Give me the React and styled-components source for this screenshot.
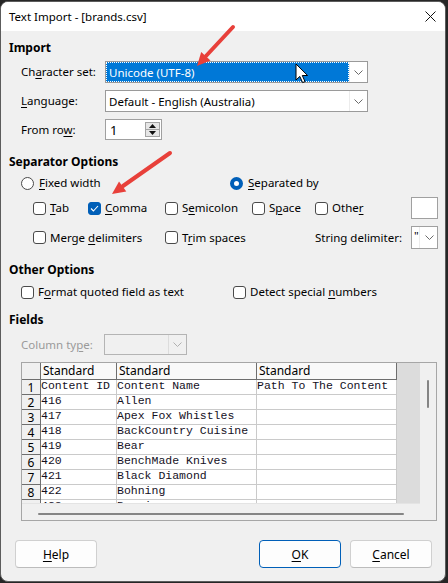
import React from 'react';
import styled, { createGlobalStyle } from 'styled-components';

const GlobalStyle = createGlobalStyle`
  html, body {
    margin: 0;
    padding: 0;
    background: #262626;
  }
  body {
    font-family: "Noto Sans", "Liberation Sans", sans-serif;
    font-size: 11.5px;
    color: #000;
  }
`;

const Screen = styled.div`
  position: relative;
  width: 448px;
  height: 583px;
  overflow: hidden;
`;

const Dialog = styled.div`
  margin-top: 1px;
  width: 446px;
  height: 581px;
  box-sizing: border-box;
  border: 1px solid #5c5c5c;
  border-radius: 8px;
  overflow: hidden;
  background: #f0f0f0;
  display: flex;
  flex-direction: column;
`;

const TitleBar = styled.div`
  height: 29px;
  flex: none;
  background: #fff;
  display: flex;
  align-items: center;
  justify-content: space-between;
  padding: 0 9px 0 8px;
`;

const Title = styled.span`
  font-size: 11.5px;
  line-height: 16px;
`;

const Body = styled.div`
  flex: 1;
  display: flex;
  flex-direction: column;
  padding: 9px 8px 0 8px;
`;

const Heading = styled.div`
  font-weight: 700;
  font-size: 12px;
  line-height: 16px;
  height: 16px;
  margin-top: ${p => p.$top || 0}px;
`;

const U = styled.span`
  text-decoration: underline;
  text-underline-offset: 2px;
`;

const FormGrid = styled.div`
  display: grid;
  grid-template-columns: ${p => p.$label}px auto;
  row-gap: 7px;
  align-items: center;
  padding-left: 12px;
  margin-top: ${p => p.$top || 0}px;
`;

const Label = styled.span`
  line-height: 16px;
  color: ${p => (p.$disabled ? '#9a9a9a' : '#000')};
  white-space: nowrap;
`;

const ComboBox = styled.div`
  width: ${p => p.$w}px;
  height: ${p => p.$h || 22}px;
  box-sizing: border-box;
  border: 1px solid ${p => (p.$disabled ? '#b4b4b4' : '#9a9a9a')};
  background: ${p => (p.$disabled ? '#f0f0f0' : '#fff')};
  display: flex;
`;

const ComboText = styled.div`
  flex: 1;
  display: flex;
  align-items: center;
  padding-left: 3px;
  white-space: nowrap;
  overflow: hidden;
  background: ${p => (p.$selected ? '#0078d7' : 'transparent')};
  color: ${p => (p.$selected ? '#fff' : '#000')};
  outline: ${p => (p.$selected ? '1px dotted #fff' : 'none')};
  outline-offset: -1px;
`;

const DropButton = styled.div`
  width: ${p => p.$w || 17}px;
  flex: none;
  border-left: 1px solid ${p => (p.$flat ? 'transparent' : p.$disabled ? '#dcdcdc' : '#ececec')};
  background: ${p => (p.$disabled ? '#f0f0f0' : '#fff')};
  display: flex;
  align-items: center;
  justify-content: center;
`;

const Chevron = ({ color = '#6a6a6a' }) => (
  <svg width="9" height="5" viewBox="0 0 9 5">
    <path d="M0.5 0.5 L4.5 4.5 L8.5 0.5" fill="none" stroke={color} strokeWidth="1" />
  </svg>
);

const Combo = ({ w, h, text, selected, disabled }) => (
  <ComboBox $w={w} $h={h} $disabled={disabled}>
    <ComboText $selected={selected}>{text}</ComboText>
    <DropButton $disabled={disabled}>
      <Chevron color={disabled ? '#b0b0b0' : '#6a6a6a'} />
    </DropButton>
  </ComboBox>
);

const SpinBox = styled.div`
  width: 57px;
  height: 21px;
  box-sizing: border-box;
  border: 1px solid #a0a0a0;
  background: #fff;
  display: flex;
  align-items: center;
  padding: 0 1px 0 4px;
`;

const SpinValue = styled.span`
  flex: 1;
  font-size: 13px;
`;

const SpinButtons = styled.div`
  display: flex;
  flex-direction: column;
`;

const SpinButton = styled.div`
  width: 15px;
  height: 8px;
  box-sizing: border-box;
  border: 1px solid #a4a4a4;
  background: #e6e6e6;
  display: flex;
  align-items: center;
  justify-content: center;
  margin-top: ${p => (p.$down ? '-1px' : '0')};
`;

const Tri = ({ down }) => (
  <svg width="7" height="4" viewBox="0 0 7 4">
    <path d={down ? 'M0 0 L7 0 L3.5 4 Z' : 'M0 4 L7 4 L3.5 0 Z'} fill="#111" />
  </svg>
);

const OptionRow = styled.div`
  display: grid;
  grid-template-columns: ${p => p.$cols};
  align-items: center;
  height: ${p => p.$h || 16}px;
  padding-left: ${p => p.$indent}px;
  margin-top: ${p => p.$top || 0}px;
`;

const Option = styled.label`
  display: flex;
  align-items: center;
  gap: ${p => p.$gap || 4}px;
  white-space: nowrap;
  line-height: 16px;
`;

const Box = styled.span`
  width: 13px;
  height: 13px;
  box-sizing: border-box;
  border-radius: 3px;
  border: 1px solid ${p => (p.$checked ? '#005fb8' : '#4a4a4a')};
  background: ${p => (p.$checked ? '#005fb8' : '#fff')};
  display: flex;
  align-items: center;
  justify-content: center;
  flex: none;
`;

const Radio = styled.span`
  width: 13px;
  height: 13px;
  box-sizing: border-box;
  border-radius: 50%;
  border: ${p => (p.$checked ? '4px solid #005fb8' : '1px solid #4a4a4a')};
  background: #fff;
  flex: none;
`;

const Check = ({ checked, children }) => (
  <Option>
    <Box $checked={checked}>
      {checked && (
        <svg width="9" height="7" viewBox="0 0 9 7">
          <path d="M1 3.5 L3.4 6 L8 1" fill="none" stroke="#fff" strokeWidth="1.1" />
        </svg>
      )}
    </Box>
    <span>{children}</span>
  </Option>
);

const RadioOption = ({ checked, children }) => (
  <Option $gap={5}>
    <Radio $checked={checked} />
    <span>{children}</span>
  </Option>
);

const TextField = styled.div`
  width: 27px;
  height: 22px;
  box-sizing: border-box;
  border: 1px solid #a0a0a0;
  background: #fff;
`;

const SmallCombo = styled.div`
  width: 27px;
  height: 23px;
  box-sizing: border-box;
  border: 1px solid #a0a0a0;
  background: #fff;
  display: flex;
`;

const Quote = styled.span`
  width: 8px;
  padding: 2px 0 0 2px;
  line-height: 14px;
  border-right: 1px solid #ececec;
`;

const GridFrame = styled.div`
  margin: 7px 0 0 12px;
  width: 416px;
  height: 159px;
  box-sizing: border-box;
  border: 1px solid #a6a6a6;
  background: #f0f0f0;
  display: grid;
  grid-template-columns: 398px 16px;
  grid-template-rows: 140px 17px;
`;

const DataArea = styled.div`
  background: #dcdcdc;
  overflow: hidden;
`;

const Table = styled.div`
  display: grid;
  grid-template-columns: 19px 76px 140px 140px;
  grid-template-rows: 17px;
  grid-auto-rows: 15px;
  width: 375px;
`;

const Corner = styled.div`
  background: #f0f0f0;
  border-right: 1px solid #6e6e6e;
  border-bottom: 1px solid #6e6e6e;
`;

const HeadCell = styled.div`
  background: #f9f9f9;
  border-right: 1px solid #6e6e6e;
  border-bottom: 1px solid #6e6e6e;
  padding-left: 2px;
  font-size: 12px;
  line-height: 16px;
  white-space: nowrap;
  overflow: hidden;
`;

const RowNum = styled.div`
  box-sizing: border-box;
  background: #f0f0f0;
  border-right: 1px solid #6e6e6e;
  border-bottom: 1px solid #6e6e6e;
  font-size: 12px;
  line-height: 12px;
  padding-top: 2px;
  text-align: center;
  overflow: hidden;
`;

const Cell = styled.div`
  box-sizing: border-box;
  background: #fff;
  border-right: 1px solid #cacaca;
  border-bottom: 1px solid #cacaca;
  font-family: "Liberation Mono", "DejaVu Sans Mono", monospace;
  font-size: 11.5px;
  line-height: 12px;
  color: #14101e;
  white-space: pre;
  overflow: hidden;
`;

const VScroll = styled.div`
  background: #f0f0f0;
  display: flex;
  justify-content: center;
  padding-top: 17px;
`;

const VThumb = styled.div`
  width: 2px;
  height: 28px;
  background: #858585;
  border-radius: 1px;
`;

const HScroll = styled.div`
  background: #f0f0f0;
  border-top: 1px solid #e4e4e4;
  padding: 9px 0 0 16px;
`;

const HThumb = styled.div`
  width: 366px;
  height: 2px;
  background: #858585;
  border-radius: 1px;
`;

const ScrollCorner = styled.div`
  background: #f0f0f0;
`;

const ButtonRow = styled.div`
  display: flex;
  margin: 19px 5px 0 6px;
  gap: 9px;
`;

const Button = styled.div`
  width: 82px;
  height: 28px;
  box-sizing: border-box;
  border: 1px solid ${p => (p.$primary ? '#005fb8' : '#d0d0d0')};
  border-bottom-color: ${p => (p.$primary ? '#005fb8' : '#bcbcbc')};
  border-radius: 4px;
  background: #fdfdfd;
  display: flex;
  align-items: center;
  justify-content: center;
  font-size: 12px;
  margin-left: ${p => (p.$push ? 'auto' : '0')};
`;

const Overlay = styled.svg`
  position: absolute;
  top: 0;
  left: 0;
  pointer-events: none;
`;

const rows = [
  ['Content ID', 'Content Name', 'Path To The Content'],
  ['416', 'Allen', ''],
  ['417', 'Apex Fox Whistles', ''],
  ['418', 'BackCountry Cuisine', ''],
  ['419', 'Bear', ''],
  ['420', 'BenchMade Knives', ''],
  ['421', 'Black Diamond', ''],
  ['422', 'Bohning', ''],
  ['423', 'Buzzie', ''],
];

export default function App() {
  return (
    <Screen>
      <GlobalStyle />
      <Dialog>
        <TitleBar>
          <Title>Text Import - [brands.csv]</Title>
          <svg width="11" height="11" viewBox="0 0 11 11">
            <path d="M0.5 0.5 L10.5 10.5 M10.5 0.5 L0.5 10.5" stroke="#111" strokeWidth="1" />
          </svg>
        </TitleBar>
        <Body>
          <Heading>Import</Heading>
          <FormGrid $label={84} $top={5}>
            <Label>Ch<U>a</U>racter set:</Label>
            <Combo w={263} text="Unicode (UTF-8)" selected />
            <Label><U>L</U>anguage:</Label>
            <Combo w={263} text="Default - English (Australia)" />
            <Label>From ro<U>w</U>:</Label>
            <SpinBox>
              <SpinValue>1</SpinValue>
              <SpinButtons>
                <SpinButton><Tri /></SpinButton>
                <SpinButton $down><Tri down /></SpinButton>
              </SpinButtons>
            </SpinBox>
          </FormGrid>

          <Heading $top={14}>Separator Options</Heading>
          <OptionRow $cols="209px auto" $indent={12} $top={5}>
            <RadioOption><U>F</U>ixed width</RadioOption>
            <RadioOption checked><U>S</U>eparated by</RadioOption>
          </OptionRow>
          <OptionRow $cols="55px 77px 87px 63px 96px 27px" $indent={24} $top={6} $h={22}>
            <Check><U>T</U>ab</Check>
            <Check checked><U>C</U>omma</Check>
            <Check>S<U>e</U>micolon</Check>
            <Check>S<U>p</U>ace</Check>
            <Check>Othe<U>r</U></Check>
            <TextField />
          </OptionRow>
          <OptionRow $cols="132px 150px 96px 27px" $indent={24} $top={7} $h={23}>
            <Check>Merge <U>d</U>elimiters</Check>
            <Check>T<U>r</U>im spaces</Check>
            <Label>String delimiter:</Label>
            <SmallCombo>
              <Quote>"</Quote>
              <DropButton $flat $w={16}>
                <Chevron />
              </DropButton>
            </SmallCombo>
          </OptionRow>

          <Heading $top={13}>Other Options</Heading>
          <OptionRow $cols="212px auto" $indent={12} $top={6}>
            <Check>F<U>o</U>rmat quoted field as text</Check>
            <Check>Detect special <U>n</U>umbers</Check>
          </OptionRow>

          <Heading $top={12}>Fields</Heading>
          <FormGrid $label={83} $top={6}>
            <Label $disabled>Column ty<U>p</U>e:</Label>
            <Combo w={83} h={21} text="" disabled />
          </FormGrid>

          <GridFrame>
            <DataArea>
              <Table>
                <Corner />
                <HeadCell>Standard</HeadCell>
                <HeadCell>Standard</HeadCell>
                <HeadCell>Standard</HeadCell>
                {rows.map((r, i) => (
                  <React.Fragment key={i}>
                    <RowNum>{i + 1}</RowNum>
                    <Cell>{r[0]}</Cell>
                    <Cell>{r[1]}</Cell>
                    <Cell>{r[2]}</Cell>
                  </React.Fragment>
                ))}
              </Table>
            </DataArea>
            <VScroll><VThumb /></VScroll>
            <HScroll><HThumb /></HScroll>
            <ScrollCorner />
          </GridFrame>

          <ButtonRow>
            <Button><span><U>H</U>elp</span></Button>
            <Button $primary $push><span><U>O</U>K</span></Button>
            <Button><span><U>C</U>ancel</span></Button>
          </ButtonRow>
        </Body>
      </Dialog>

      <Overlay width="448" height="583" viewBox="0 0 448 583">
        <g stroke="#e8403a" strokeWidth="4" strokeLinecap="round">
          <line x1="233" y1="27" x2="206" y2="56" />
          <line x1="170" y1="153" x2="123" y2="186" />
        </g>
        <g fill="#e8403a">
          <polygon points="197,66 210.5,60.5 201.2,52" />
          <polygon points="112,194 126.3,191.6 119,181.4" />
        </g>
        <path
          d="M296 64 L296 80 L299.8 76.4 L302.6 82.6 L305 81.6 L302.3 75.5 L307.6 75.5 Z"
          fill="#fff"
          stroke="#000"
          strokeWidth="1"
          strokeLinejoin="round"
        />
      </Overlay>
    </Screen>
  );
}
